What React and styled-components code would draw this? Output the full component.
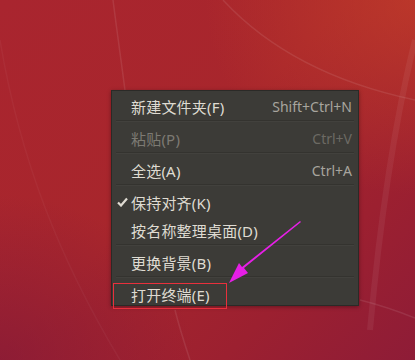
import React from 'react';
import styled, { createGlobalStyle } from 'styled-components';

const GlobalStyle = createGlobalStyle`
  html, body {
    margin: 0;
    padding: 0;
  }
  body {
    font-family: "Noto Sans", "Noto Sans CJK SC", sans-serif;
  }
`;

const Desktop = styled.div`
  position: relative;
  width: 415px;
  height: 360px;
  overflow: hidden;
  box-sizing: border-box;
  padding: 90px 0 0 111px;
  background:
    radial-gradient(ellipse 260px 220px at 0% 100%, rgba(120, 20, 60, 0.55), transparent 75%),
    radial-gradient(ellipse 280px 260px at 100% 0%, rgba(205, 70, 40, 0.55), transparent 75%),
    linear-gradient(135deg, #a9252f 0%, #a8262c 45%, #9c2030 75%, #8e1c37 100%);
`;

const Decor = styled.svg`
  position: absolute;
  inset: 0;
  pointer-events: none;
`;

const Menu = styled.div`
  position: relative;
  width: 248px;
  height: 216px;
  box-sizing: border-box;
  overflow: hidden;
  background: #3c3b37;
  border: 1px solid #2b2a27;
  padding-top: 1px;
  box-shadow: 0 1px 4px rgba(0, 0, 0, 0.35);
  display: flex;
  flex-direction: column;
`;

const Item = styled.div`
  flex: none;
  height: 28px;
  display: flex;
  align-items: center;
  padding: 0 6px 0 19px;
  font-size: 15px;
  color: ${p => (p.$disabled ? '#7c7a73' : '#dfdbd2')};
  position: relative;
`;

const Label = styled.span`
  flex: 1;
  white-space: nowrap;
  letter-spacing: 0.2px;
`;

const Shortcut = styled.span`
  font-size: 14px;
  color: ${p => (p.$disabled ? '#6c6a64' : '#a8a59e')};
  white-space: nowrap;
`;

const Check = styled.span`
  position: absolute;
  left: 5px;
  top: 50%;
  transform: translateY(-50%);
  display: flex;
`;

const Separator = styled.div`
  flex: none;
  height: 1px;
  margin: 0 4px 3px 4px;
  background: #34332f;
  border-bottom: 1px solid #42413d;
  margin-bottom: 2px;
`;

const Highlight = styled.div`
  position: absolute;
  left: 113px;
  top: 283px;
  width: 114px;
  height: 26px;
  box-sizing: border-box;
  border: 1px solid #e8303c;
`;

const Arrow = styled.svg`
  position: absolute;
  left: 0;
  top: 0;
  pointer-events: none;
`;

const items = [
  { label: '新建文件夹(F)', shortcut: 'Shift+Ctrl+N', sep: true },
  { label: '粘贴(P)', shortcut: 'Ctrl+V', disabled: true, sep: true },
  { label: '全选(A)', shortcut: 'Ctrl+A', sep: true },
  { label: '保持对齐(K)', checked: true },
  { label: '按名称整理桌面(D)', sep: true },
  { label: '更换背景(B)', sep: true },
  { label: '打开终端(E)' },
];

const CheckIcon = () => (
  <svg width="11" height="10" viewBox="0 0 11 10">
    <path d="M1 5.5 L4 8.5 L10 1.5" fill="none" stroke="#dfdbd2" strokeWidth="2.2" />
  </svg>
);

const App = () => (
  <>
    <GlobalStyle />
    <Desktop>
      <Decor width="415" height="360" viewBox="0 0 415 360">
        <g fill="none" stroke="rgba(255,255,255,0.09)" strokeWidth="1.5">
          <path d="M113 0 C118 40 124 80 130 130" />
          <path d="M223 0 C260 40 320 80 415 100" />
          <path d="M415 40 C395 120 380 220 370 330" strokeWidth="6" stroke="rgba(255,255,255,0.06)" />
          <path d="M360 300 C380 305 400 312 415 318" />
          <path d="M175 310 C180 330 185 345 190 360" />
          <path d="M0 40 C20 160 60 260 120 360" stroke="rgba(255,255,255,0.04)" />
        </g>
      </Decor>
      <Menu>
        {items.map(item => (
          <React.Fragment key={item.label}>
            <Item $disabled={item.disabled}>
              {item.checked && (
                <Check>
                  <CheckIcon />
                </Check>
              )}
              <Label>{item.label}</Label>
              {item.shortcut && <Shortcut $disabled={item.disabled}>{item.shortcut}</Shortcut>}
            </Item>
            {item.sep && <Separator />}
          </React.Fragment>
        ))}
      </Menu>
      <Highlight />
      <Arrow width="415" height="360" viewBox="0 0 415 360">
        <path d="M301 222 L244 268 L248 273 L229 283 L239 263 L242 267 L300 221 Z" fill="#e61fe6" />
      </Arrow>
    </Desktop>
  </>
);

export default App;
